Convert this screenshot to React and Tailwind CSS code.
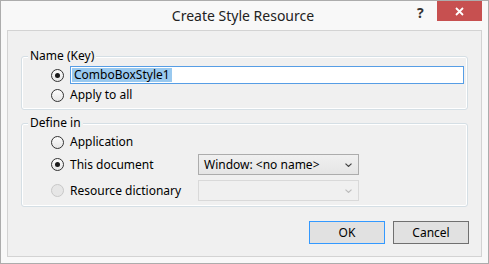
import React from 'react';

const font = "font-['Segoe_UI','Noto_Sans',sans-serif]";

const Radio = ({ checked, disabled }) => (
  <span
    className={`w-[13px] h-[13px] rounded-full border flex items-center justify-center shrink-0 ${
      disabled ? 'border-[#c8c8c8] bg-[#e6e6e6]' : 'border-[#333] bg-gradient-to-b from-[#fcfcfc] to-[#e6e6e6]'
    }`}
  >
    {checked && <span className="w-[5px] h-[5px] rounded-full bg-[#1a1a1a]" />}
  </span>
);

const Chevron = ({ disabled }) => (
  <svg width="7" height="4" viewBox="0 0 7 4" className="shrink-0">
    <path d="M0.5 0.6 L3.5 3.4 L6.5 0.6" fill="none" stroke={disabled ? '#bcbcbc' : '#404040'} strokeWidth="1.2" />
  </svg>
);

const GroupBox = ({ label, className, children }) => (
  <div className={`relative ml-[13px] w-[447px] border border-[#d5dfe5] rounded-[3px] shadow-[inset_0_0_0_1px_#fff] ${className}`}>
    <span className="absolute -top-[9px] left-[6px] px-[2px] bg-[#f0f0f0] text-[12px] leading-[16px] text-black">
      {label}
    </span>
    {children}
  </div>
);

export default function App() {
  return (
    <div className={`w-[489px] h-[264px] bg-[#f8f8f8] border border-[#acacac] flex flex-col ${font}`}>
      {/* Title bar */}
      <div className="h-[29px] flex items-start shrink-0">
        <div className="flex-1 flex justify-center pt-[5px] pl-[68px]">
          <span className="text-[14px] leading-[20px] text-[#222]">Create Style Resource</span>
        </div>
        <span className="w-[20px] pt-[3px] text-[14px] font-bold text-[#333] leading-[18px]">?</span>
        <div className="w-[45px] h-[20px] bg-[#c75050] flex items-center justify-center mr-[6px]">
          <svg width="9" height="9" viewBox="0 0 9 9">
            <path d="M1 1 L8 8 M8 1 L1 8" stroke="#fff" strokeWidth="1.8" />
          </svg>
        </div>
      </div>

      {/* Content panel */}
      <div className="mx-[6px] mb-[6px] flex-1 bg-[#f0f0f0] border border-[#d3d3d3] flex flex-col text-[12px] text-black">
        <GroupBox label="Name (Key)" className="mt-[25px] h-[54px] pt-[9px]">
          <div className="flex items-center pl-[29px]">
            <Radio checked />
            <div className="ml-[6px] w-[394px] h-[18px] bg-white border border-[#569de5] flex items-center px-[1px]">
              <span className="bg-[#99c9ef] h-[14px] leading-[14px] px-[2px]">ComboBoxStyle1</span>
            </div>
          </div>
          <div className="flex items-center pl-[29px] mt-[3px] h-[16px]">
            <Radio />
            <span className="ml-[6px]">Apply to all</span>
          </div>
        </GroupBox>

        <GroupBox label="Define in" className="mt-[13px] h-[84px] pt-[10px]">
          <div className="flex items-center pl-[29px] h-[16px]">
            <Radio />
            <span className="ml-[6px]">Application</span>
          </div>
          <div className="flex items-center pl-[29px] mt-[4px] h-[21px]">
            <Radio checked />
            <span className="ml-[6px] w-[128px]">This document</span>
            <div className="w-[161px] h-[21px] border border-[#acacac] bg-gradient-to-b from-[#f0f0f0] to-[#e5e5e5] flex items-center justify-between pl-[5px] pr-[6px]">
              <span>Window: &lt;no name&gt;</span>
              <Chevron />
            </div>
          </div>
          <div className="flex items-center pl-[29px] mt-[5px] h-[21px]">
            <Radio disabled />
            <span className="ml-[6px] w-[128px] text-[#000]">Resource dictionary</span>
            <div className="w-[161px] h-[21px] border border-[#d9d9d9] bg-[#f0f0f0] flex items-center justify-end pr-[6px]">
              <Chevron disabled />
            </div>
          </div>
        </GroupBox>

        <div className="mt-[14px] flex justify-end gap-[8px] mr-[12px]">
          <button className="w-[76px] h-[23px] border border-[#3399ff] bg-[#e1e1e1] text-[12px]">OK</button>
          <button className="w-[76px] h-[23px] border border-[#707070] bg-[#e1e1e1] text-[12px]">Cancel</button>
        </div>
      </div>
    </div>
  );
}
